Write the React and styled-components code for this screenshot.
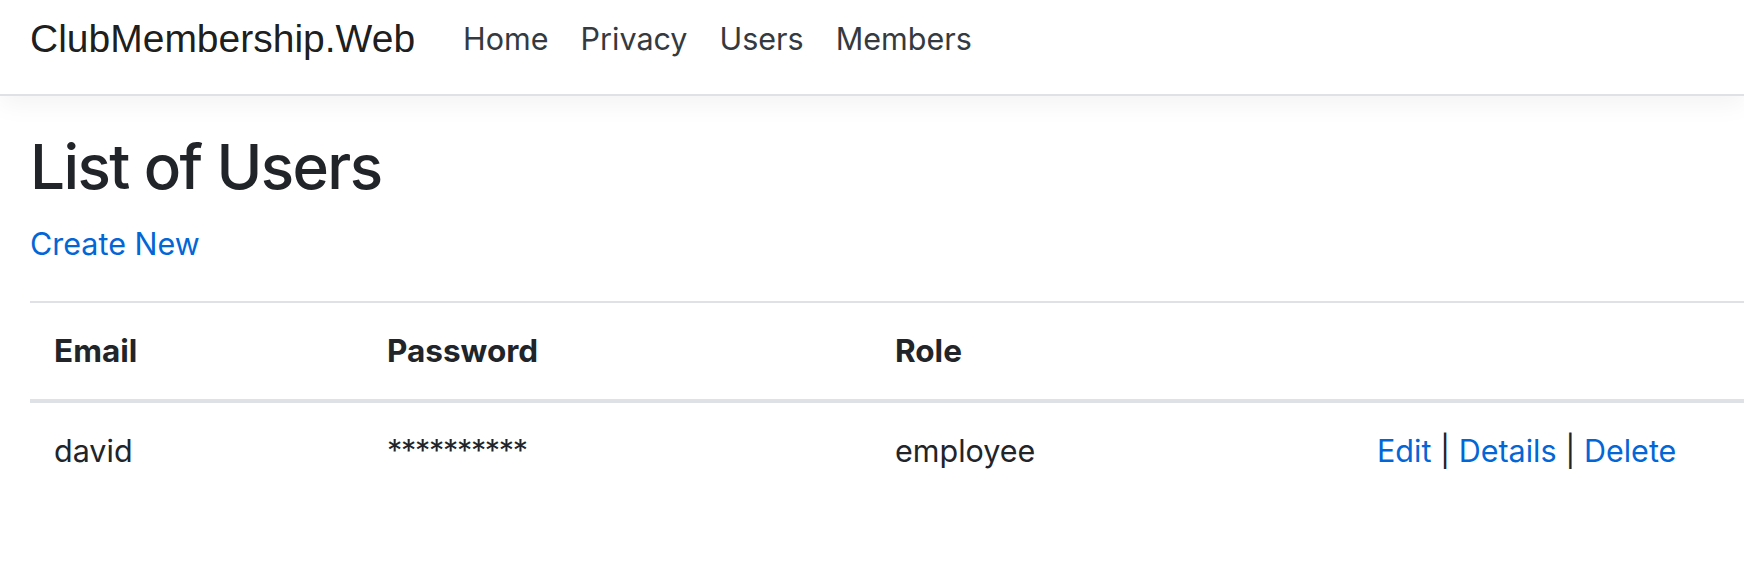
import React from "react";
import styled, { createGlobalStyle } from "styled-components";

const GlobalStyle = createGlobalStyle`
  html, body {
    margin: 0;
    padding: 0;
    background: #fff;
    overflow: hidden;
  }
  body {
    font-family: Inter, "Noto Sans", sans-serif;
    color: #212529;
    font-size: 30.5px;
    line-height: 1.5;
  }
  * { box-sizing: border-box; }
`;

const Navbar = styled.nav`
  position: relative;
  z-index: 1;
  height: 96px;
  padding-bottom: 16px;
  background: #fff;
  border-bottom: 2px solid #dee2e6;
  box-shadow: 0 8px 24px rgba(0, 0, 0, 0.05);
`;

const NavInner = styled.div`
  display: flex;
  align-items: center;
  height: 78px;
  padding: 0 30px;
`;

const Brand = styled.a`
  font-family: "Liberation Sans", Arial, sans-serif;
  font-size: 39px;
  line-height: 60px;
  color: rgba(0, 0, 0, 0.9);
  text-decoration: none;
  margin-right: 32px;
  white-space: nowrap;
`;

const NavList = styled.ul`
  display: flex;
  list-style: none;
  margin: 0;
  padding: 0;
`;

const NavLink = styled.a`
  display: block;
  padding: 0 16px;
  font-size: 30.5px;
  line-height: 48px;
  color: #343a40;
  text-decoration: none;
`;

const Main = styled.main`
  padding: 32px 30px 0;
`;

const Title = styled.h1`
  margin: 0 0 14px;
  font-size: 62px;
  font-weight: 500;
  letter-spacing: -1.6px;
  line-height: 1.25;
  color: #212529;
`;

const Para = styled.p`
  margin: 0 0 33px;
  line-height: 48px;
`;

const Link = styled.a`
  color: #0366d6;
  text-decoration: none;
`;

const Table = styled.table`
  width: 2220px;
  table-layout: fixed;
  border-collapse: separate;
  border-spacing: 0;
  color: #212529;
`;

const HeadCell = styled.th`
  text-align: left;
  font-size: 31.5px;
  font-weight: 700;
  padding: 24px;
  line-height: 48px;
  vertical-align: bottom;
  border-top: 2px solid #dee2e6;
  border-bottom: 4px solid #dee2e6;
`;

const Cell = styled.td`
  padding: 24px;
  line-height: 48px;
  vertical-align: top;
  white-space: nowrap;
`;

const Masked = styled.span`
  letter-spacing: -1.3px;
`;

const Sep = styled.span`
  color: #212529;
`;

const columns = [
  { label: "Email", width: 333 },
  { label: "Password", width: 508 },
  { label: "Role", width: 482 },
  { label: "", width: 897 },
];

const users = [{ email: "david", password: "**********", role: "employee" }];

export default function App() {
  return (
    <>
      <GlobalStyle />
      <Navbar>
        <NavInner>
          <Brand href="#">ClubMembership.Web</Brand>
          <NavList>
            {["Home", "Privacy", "Users", "Members"].map((l) => (
              <li key={l}>
                <NavLink href="#">{l}</NavLink>
              </li>
            ))}
          </NavList>
        </NavInner>
      </Navbar>
      <Main>
        <Title>List of Users</Title>
        <Para>
          <Link href="#">Create New</Link>
        </Para>
        <Table>
          <colgroup>
            {columns.map((c, i) => (
              <col key={i} style={{ width: c.width }} />
            ))}
          </colgroup>
          <thead>
            <tr>
              {columns.map((c, i) => (
                <HeadCell key={i}>{c.label}</HeadCell>
              ))}
            </tr>
          </thead>
          <tbody>
            {users.map((u) => (
              <tr key={u.email}>
                <Cell>{u.email}</Cell>
                <Cell>
                  <Masked>{u.password}</Masked>
                </Cell>
                <Cell>{u.role}</Cell>
                <Cell>
                  <Link href="#">Edit</Link> <Sep>|</Sep>{" "}
                  <Link href="#">Details</Link> <Sep>|</Sep>{" "}
                  <Link href="#">Delete</Link>
                </Cell>
              </tr>
            ))}
          </tbody>
        </Table>
      </Main>
    </>
  );
}
